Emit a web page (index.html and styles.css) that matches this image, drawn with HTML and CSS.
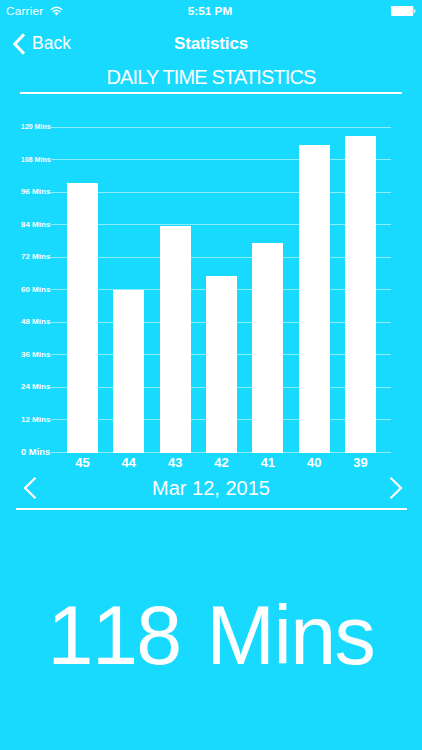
FILE: index.html
```html
<!DOCTYPE html>
<html lang="en">
<head>
    <meta charset="UTF-8">
    <meta name="viewport" content="width=device-width, initial-scale=1.0">
    <title>Statistics</title>
    <link rel="stylesheet" href="styles.css">
</head>
<body>
    <div class="status-bar">
        <div class="carrier">
            <span>Carrier</span>
            <svg class="wifi" width="13" height="10" viewBox="0 0 13 10" fill="none" stroke="#fff" stroke-width="1.5">
                <path d="M0.8 3.7 Q6.5 -1.3 12.2 3.7"/>
                <path d="M2.8 5.9 Q6.5 2.6 10.2 5.9"/>
                <path d="M4.4 7.2 Q6.5 5.5 8.6 7.2 L6.5 9.4 Z" fill="#fff" stroke="none"/>
            </svg>
        </div>
        <span class="time">5:51 PM</span>
        <svg class="battery" width="25" height="10" viewBox="0 0 25 10" fill="#fff">
            <rect x="0" y="0" width="22.3" height="10" rx="1"/>
            <path d="M23 3.3 Q24.5 3.5 24.5 5 Q24.5 6.5 23 6.7 Z"/>
        </svg>
    </div>
    <div class="nav-bar">
        <div class="back">
            <svg width="13" height="22" viewBox="0 0 13 22" fill="none" stroke="#fff" stroke-width="3">
                <path d="M12 1.4 L2.8 11 L12 20.6"/>
            </svg>
            <span>Back</span>
        </div>
        <span class="title">Statistics</span>
    </div>
    <h1><span>DAILY TIME STATISTICS</span></h1>

    <div class="chart">
        <div class="grid-lines">
            <div class="row tiny"><span>120 Mins</span></div>
            <div class="row tiny"><span>108 Mins</span></div>
            <div class="row"><span>96 Mins</span></div>
            <div class="row"><span>84 Mins</span></div>
            <div class="row"><span>72 Mins</span></div>
            <div class="row"><span>60 Mins</span></div>
            <div class="row"><span>48 Mins</span></div>
            <div class="row"><span>36 Mins</span></div>
            <div class="row"><span>24 Mins</span></div>
            <div class="row"><span>12 Mins</span></div>
            <div class="row large"><span>0 Mins</span></div>
        </div>
        <div class="bars">
            <div class="bar" style="height: 82.6%"></div>
            <div class="bar" style="height: 49.9%"></div>
            <div class="bar" style="height: 69.5%"></div>
            <div class="bar" style="height: 54.2%"></div>
            <div class="bar" style="height: 64.4%"></div>
            <div class="bar" style="height: 94.4%"></div>
            <div class="bar" style="height: 97.2%"></div>
        </div>
        <div class="days">
            <span>45</span>
            <span>44</span>
            <span>43</span>
            <span>42</span>
            <span>41</span>
            <span>40</span>
            <span>39</span>
        </div>
    </div>

    <div class="date-picker">
        <svg width="14" height="24" viewBox="0 0 14 24" fill="none" stroke="#fff" stroke-width="2.2">
            <path d="M12.5 1.8 L2 12 L12.5 22.2"/>
        </svg>
        <span class="date">Mar 12, 2015</span>
        <svg width="14" height="24" viewBox="0 0 14 24" fill="none" stroke="#fff" stroke-width="2.2">
            <path d="M1.5 1.8 L12 12 L1.5 22.2"/>
        </svg>
    </div>
    <div class="total"><span>118 Mins</span></div>
</body>
</html>
```
FILE: styles.css
```css
* {
    box-sizing: border-box;
}
body {
    margin: 0;
    width: 422px;
    height: 750px;
    overflow: hidden;
    background-color: #18daff;
    color: #fff;
    font-family: "Liberation Sans", Arial, sans-serif;
}
svg {
    display: block;
}
.status-bar {
    display: grid;
    grid-template-columns: 1fr auto 1fr;
    align-items: center;
    height: 22px;
    padding: 0 6px;
    font-size: 11.8px;
}
.carrier {
    display: flex;
    align-items: center;
    gap: 7px;
    letter-spacing: 0.2px;
}
.time {
    padding-right: 2px;
    font-weight: bold;
}
.battery {
    justify-self: end;
}
.nav-bar {
    display: grid;
    grid-template-columns: 1fr auto 1fr;
    align-items: center;
    height: 43px;
    padding: 0 12px;
    font-size: 17.5px;
}
.back {
    display: flex;
    align-items: center;
    gap: 7px;
}
.title {
    font-weight: bold;
    font-size: 17px;
    letter-spacing: -0.15px;
}
h1 {
    margin: 0 20px;
    height: 29px;
    border-bottom: 2px solid #fff;
    font-size: 20px;
    font-weight: normal;
    letter-spacing: -0.85px;
    line-height: 24px;
    text-align: center;
}
.chart {
    display: grid;
    grid-template-columns: 31px 340px;
    grid-template-rows: 326px 20px;
    margin: 32.5px 0 0 20px;
}
.grid-lines {
    grid-column: 1 / 3;
    grid-row: 1;
    display: flex;
    flex-direction: column;
    justify-content: space-between;
}
.row {
    display: flex;
    align-items: center;
    height: 1px;
    font-size: 8px;
    font-weight: bold;
    line-height: 10px;
}
.row span {
    width: 31px;
    padding-left: 1px;
    white-space: nowrap;
}
.row::after {
    content: "";
    flex: 1;
    height: 1px;
    background-color: rgba(255, 255, 255, 0.5);
}
.row.tiny {
    font-size: 7px;
}
.row.large {
    font-size: 9.4px;
}
.bars,
.days {
    grid-column: 2;
    display: grid;
    grid-template-columns: repeat(7, 31px);
    column-gap: 15.35px;
    padding-left: 16px;
}
.bars {
    grid-row: 1;
    align-items: end;
}
.bar {
    background-color: #fff;
}
.days {
    grid-row: 2;
    font-size: 13px;
    font-weight: bold;
    line-height: 20px;
    text-align: center;
}
.date-picker {
    display: flex;
    justify-content: space-between;
    align-items: center;
    height: 37px;
    margin: 0.5px 15px 0 16px;
    padding: 0 4px 6px 7px;
    border-bottom: 2px solid #fff;
    font-size: 20px;
}
.date {
    padding: 1px 4px 0 0;
}
.total {
    margin-top: 79px;
    font-size: 82.5px;
    font-kerning: none;
    letter-spacing: -1.5px;
    word-spacing: 4px;
    line-height: 92px;
    text-align: center;
    white-space: nowrap;
}
```
